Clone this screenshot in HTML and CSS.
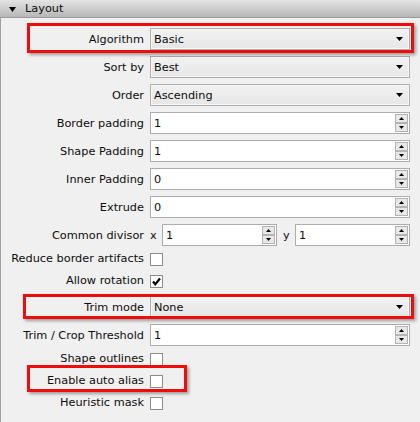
FILE: index.html
```html
<!DOCTYPE html>
<html>
<head>
<meta charset="utf-8">
<link rel="stylesheet" href="styles.css">
</head>
<body>
<div class="panel">
  <div class="header"><svg class="tri" width="7" height="5" viewBox="0 0 7 5"><polygon points="0,0 7,0 3.5,5" fill="#000"/></svg><span>Layout</span></div>
  <div class="form">
    <div class="lbl">Algorithm</div>
    <div class="combo"><span>Basic</span><svg class="arrow" width="7" height="4" viewBox="0 0 7 4"><polygon points="0,0 7,0 3.5,4" fill="#000"/></svg></div>

    <div class="lbl">Sort by</div>
    <div class="combo"><span>Best</span><svg class="arrow" width="7" height="4" viewBox="0 0 7 4"><polygon points="0,0 7,0 3.5,4" fill="#000"/></svg></div>

    <div class="lbl">Order</div>
    <div class="combo"><span>Ascending</span><svg class="arrow" width="7" height="4" viewBox="0 0 7 4"><polygon points="0,0 7,0 3.5,4" fill="#000"/></svg></div>

    <div class="lbl">Border padding</div>
    <div class="spin"><span class="val">1</span><div class="btns"><div class="btn"><svg width="5" height="3" viewBox="0 0 5 3"><polygon points="0,3 5,3 2.5,0" fill="#000"/></svg></div><div class="btn"><svg width="5" height="3" viewBox="0 0 5 3"><polygon points="0,0 5,0 2.5,3" fill="#000"/></svg></div></div></div>

    <div class="lbl">Shape Padding</div>
    <div class="spin"><span class="val">1</span><div class="btns"><div class="btn"><svg width="5" height="3" viewBox="0 0 5 3"><polygon points="0,3 5,3 2.5,0" fill="#000"/></svg></div><div class="btn"><svg width="5" height="3" viewBox="0 0 5 3"><polygon points="0,0 5,0 2.5,3" fill="#000"/></svg></div></div></div>

    <div class="lbl">Inner Padding</div>
    <div class="spin"><span class="val">0</span><div class="btns"><div class="btn"><svg width="5" height="3" viewBox="0 0 5 3"><polygon points="0,3 5,3 2.5,0" fill="#000"/></svg></div><div class="btn"><svg width="5" height="3" viewBox="0 0 5 3"><polygon points="0,0 5,0 2.5,3" fill="#000"/></svg></div></div></div>

    <div class="lbl">Extrude</div>
    <div class="spin"><span class="val">0</span><div class="btns"><div class="btn"><svg width="5" height="3" viewBox="0 0 5 3"><polygon points="0,3 5,3 2.5,0" fill="#000"/></svg></div><div class="btn"><svg width="5" height="3" viewBox="0 0 5 3"><polygon points="0,0 5,0 2.5,3" fill="#000"/></svg></div></div></div>

    <div class="lbl">Common divisor</div>
    <div class="pair">
      <span class="axis axis-x">x</span>
      <div class="spin half"><span class="val">1</span><div class="btns"><div class="btn"><svg width="5" height="3" viewBox="0 0 5 3"><polygon points="0,3 5,3 2.5,0" fill="#000"/></svg></div><div class="btn"><svg width="5" height="3" viewBox="0 0 5 3"><polygon points="0,0 5,0 2.5,3" fill="#000"/></svg></div></div></div>
      <span class="axis axis-y">y</span>
      <div class="spin half"><span class="val">1</span><div class="btns"><div class="btn"><svg width="5" height="3" viewBox="0 0 5 3"><polygon points="0,3 5,3 2.5,0" fill="#000"/></svg></div><div class="btn"><svg width="5" height="3" viewBox="0 0 5 3"><polygon points="0,0 5,0 2.5,3" fill="#000"/></svg></div></div></div>
    </div>

    <div class="lbl crow">Reduce border artifacts</div>
    <div class="crow"><div class="cb"></div></div>

    <div class="lbl crow">Allow rotation</div>
    <div class="crow"><div class="cb"><svg width="11" height="11" viewBox="0 0 11 11"><polyline points="2,5.5 4.3,8.2 9,2.5" fill="none" stroke="#000" stroke-width="2.2"/></svg></div></div>

    <div class="lbl">Trim mode</div>
    <div class="combo"><span>None</span><svg class="arrow" width="7" height="4" viewBox="0 0 7 4"><polygon points="0,0 7,0 3.5,4" fill="#000"/></svg></div>

    <div class="lbl">Trim / Crop Threshold</div>
    <div class="spin"><span class="val">1</span><div class="btns"><div class="btn"><svg width="5" height="3" viewBox="0 0 5 3"><polygon points="0,3 5,3 2.5,0" fill="#000"/></svg></div><div class="btn"><svg width="5" height="3" viewBox="0 0 5 3"><polygon points="0,0 5,0 2.5,3" fill="#000"/></svg></div></div></div>

    <div class="lbl crow">Shape outlines</div>
    <div class="crow"><div class="cb"></div></div>

    <div class="lbl crow">Enable auto alias</div>
    <div class="crow"><div class="cb"></div></div>

    <div class="lbl crow">Heuristic mask</div>
    <div class="crow"><div class="cb"></div></div>
  </div>
  <div class="mark mark-algo"></div>
  <div class="mark mark-trim"></div>
  <div class="mark mark-alias"></div>
</div>
</body>
</html>
```

FILE: styles.css
```css
html, body {
  margin: 0;
  padding: 0;
  background: #f0f0f0;
}
body {
  width: 420px;
  height: 422px;
  overflow: hidden;
  font-family: "DejaVu Sans", Verdana, sans-serif;
  font-size: 11.3px;
  color: #0d0d0d;
}
.panel {
  position: relative;
  height: 422px;
}
.header {
  height: 17px;
  border-bottom: 1px solid #9a9a9a;
  background: linear-gradient(#e4e4e4, #c9c9c9 60%, #b7b7b7);
  display: flex;
  align-items: center;
  padding-left: 9px;
}
.header .tri {
  margin-right: 9px;
  margin-top: 1px;
}
.form {
  border-left: 1px solid #a2a2a2;
  height: 404px;
  box-sizing: border-box;
  padding: 10px 10px 0 0;
  display: grid;
  grid-template-columns: 143px 1fr;
  column-gap: 6px;
  row-gap: 6px;
  align-content: start;
}
.lbl {
  text-align: right;
  display: flex;
  align-items: center;
  justify-content: flex-end;
  height: 22px;
  white-space: nowrap;
}
.lbl.crow, .crow {
  height: 16px;
}
.crow {
  display: flex;
  align-items: flex-start;
}
.combo {
  height: 22px;
  box-sizing: border-box;
  border: 1px solid #adadad;
  background: linear-gradient(#f2f2f2, #e6e6e6);
  box-shadow: inset 0 0 0 1px #f7f7f7;
  display: flex;
  align-items: center;
  justify-content: space-between;
  padding: 0 6px 0 3px;
}
.combo .arrow {
  display: block;
}
.spin {
  height: 22px;
  box-sizing: border-box;
  border: 1px solid #acacac;
  background: #fff;
  display: flex;
  align-items: center;
  padding-left: 3px;
}
.spin .val {
  flex: 1;
}
.btns {
  display: flex;
  flex-direction: column;
  width: 13px;
  margin-right: 1px;
}
.btn {
  height: 9px;
  box-sizing: border-box;
  border: 1px solid #b4b4b4;
  background: #e8e8e8;
  display: flex;
  align-items: center;
  justify-content: center;
}
.btn svg {
  display: block;
}
.pair {
  display: flex;
  align-items: center;
  height: 22px;
}
.axis {
  width: 7px;
}
.axis-x {
  margin-right: 5px;
}
.axis-y {
  margin: 0 5px 0 6px;
}
.spin.half {
  width: 115px;
}
.cb {
  width: 13px;
  height: 13px;
  box-sizing: border-box;
  border: 1px solid #8c8c8c;
  background: #fff;
  margin-top: 1px;
  display: flex;
  align-items: center;
  justify-content: center;
}
.cb svg {
  display: block;
}
.mark {
  position: absolute;
  box-sizing: border-box;
  border: 3px solid #ee0d0d;
  box-shadow: 2px 2px 3px rgba(0, 0, 0, 0.35);
}
.mark-algo {
  left: 27px;
  top: 23px;
  width: 387px;
  height: 30px;
}
.mark-trim {
  left: 23px;
  top: 294px;
  width: 391px;
  height: 25px;
}
.mark-alias {
  left: 27px;
  top: 365px;
  width: 160px;
  height: 27px;
}
```
